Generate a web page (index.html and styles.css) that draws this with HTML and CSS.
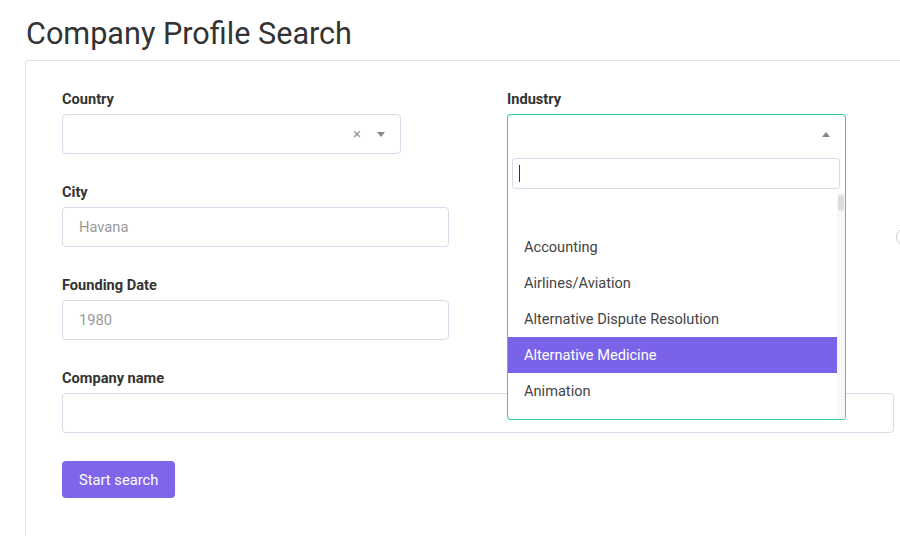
FILE: index.html
```html
<!DOCTYPE html>
<html lang="en">

<head>
    <meta charset="UTF-8">
    <meta name="viewport" content="width=device-width, initial-scale=1.0">
    <title>Company Profile Search</title>
    <link rel="stylesheet" href="styles.css">
</head>

<body>

    <h1 class="page-title">Company Profile Search</h1>

    <div class="card">
        <form class="search-form">
            <div class="field">
                <label>Country</label>
                <div class="select">
                    <span class="select-clear">&times;</span>
                    <span class="select-arrow"></span>
                </div>
            </div>

            <div class="field field-industry">
                <label>Industry</label>
                <div class="select select-open">
                    <span class="select-arrow up"></span>
                    <div class="dropdown">
                        <div class="dropdown-search"><span class="caret"></span></div>
                        <div class="dropdown-body">
                            <ul class="options">
                                <li></li>
                                <li>Accounting</li>
                                <li>Airlines/Aviation</li>
                                <li>Alternative Dispute Resolution</li>
                                <li class="active">Alternative Medicine</li>
                                <li>Animation</li>
                            </ul>
                            <div class="scrollbar"><div class="thumb"></div></div>
                        </div>
                    </div>
                </div>
            </div>

            <div class="field">
                <label>City</label>
                <input type="text" class="input" placeholder="Havana">
            </div>

            <div class="field">
                <span class="side-toggle"></span>
            </div>

            <div class="field">
                <label>Founding Date</label>
                <input type="text" class="input" placeholder="1980">
            </div>

            <div class="field"></div>

            <div class="field field-wide">
                <label>Company name</label>
                <input type="text" class="input">
            </div>

            <div class="actions">
                <button type="button" class="btn">Start search</button>
            </div>
        </form>
    </div>

</body>

</html>
```

FILE: styles.css
```css
body {
    font-family: Roboto, "Liberation Sans", Arial, sans-serif;
    margin: 0;
    background-color: #fff;
    color: #444;
    overflow: hidden;
}

.page-title {
    font-size: 30.6px;
    font-weight: 400;
    color: #333;
    margin: 16px 0 9px 26px;
    line-height: 35px;
}

.card {
    margin-left: 25px;
    width: 920px;
    height: 476px;
    border: 1px solid #e1e1e1;
    border-bottom: none;
    border-radius: 4px 0 0 0;
    padding: 28px 0 0 36px;
    box-sizing: border-box;
}

.search-form {
    display: grid;
    grid-template-columns: 387px 387px;
    column-gap: 58px;
    row-gap: 28px;
}

.field {
    position: relative;
}

.field-wide {
    grid-column: 1 / span 2;
}

label {
    display: block;
    font-size: 14.6px;
    font-weight: 700;
    line-height: 20px;
    color: #333;
    margin-bottom: 5px;
}

.input {
    display: block;
    width: 100%;
    height: 40px;
    box-sizing: border-box;
    border: 1px solid #dcd9ea;
    border-radius: 4px;
    padding: 0 16px;
    font-family: inherit;
    font-size: 14.7px;
    color: #444;
}

.input::placeholder {
    color: #999;
}

.select {
    position: relative;
    width: 339px;
    height: 40px;
    box-sizing: border-box;
    border: 1px solid #dcd9ea;
    border-radius: 4px;
}

.select-clear {
    position: absolute;
    right: 39px;
    top: 10px;
    font-size: 15px;
    line-height: 18px;
    color: #999;
}

.select-arrow {
    position: absolute;
    right: 15px;
    top: 17px;
    width: 0;
    height: 0;
    border-left: 4px solid transparent;
    border-right: 4px solid transparent;
    border-top: 5px solid #888;
}

.select-arrow.up {
    border-top: none;
    border-bottom: 5px solid #888;
}

.select-open {
    border-color: #2ed39c;
    border-radius: 4px 4px 0 0;
    border-bottom: none;
    z-index: 5;
}

.dropdown {
    position: absolute;
    left: -1px;
    top: 39px;
    width: 339px;
    height: 266px;
    box-sizing: border-box;
    background-color: #fff;
    border: 1px solid #2ed39c;
    border-top: none;
    border-radius: 0 0 4px 4px;
    overflow: hidden;
}

.dropdown-search {
    margin: 4px 5px 4px 4px;
    height: 31px;
    box-sizing: border-box;
    border: 1px solid #dcd9ea;
    border-radius: 3px;
    position: relative;
}

.caret {
    position: absolute;
    left: 6px;
    top: 6px;
    width: 1px;
    height: 17px;
    background-color: #333;
}

.dropdown-body {
    display: flex;
    height: 226px;
}

.options {
    list-style: none;
    margin: 0;
    padding: 0;
    flex: 1;
    overflow: hidden;
}

.options li {
    height: 36px;
    line-height: 36px;
    padding-left: 16px;
    font-size: 14.6px;
    color: #444;
}

.options li.active {
    background-color: #7b63e9;
    color: #fff;
}

.scrollbar {
    width: 8px;
    background-color: #f7f7f7;
    padding-top: 2px;
}

.thumb {
    height: 16px;
    margin: 0 1px;
    border-radius: 3px;
    background-color: #dcdcdc;
}

.side-toggle {
    position: absolute;
    left: 389px;
    top: 46px;
    width: 16px;
    height: 16px;
    border: 1px solid #cfcfcf;
    border-radius: 50%;
}

.actions {
    grid-column: 1 / span 2;
}

.btn {
    height: 37px;
    padding: 0 17px;
    font-family: inherit;
    font-size: 14.7px;
    color: #fff;
    background-color: #7e65ea;
    border: none;
    border-radius: 4px;
    cursor: pointer;
}

.btn:hover {
    background-color: #6c52e0;
}
```
